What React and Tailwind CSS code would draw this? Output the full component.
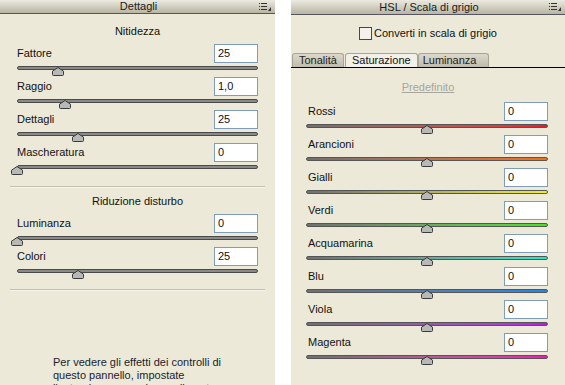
const font = { fontFamily: '"Liberation Sans", Arial, sans-serif' };

const MenuIcon = () => (
  <svg width="13" height="8" viewBox="0 0 13 8" className="shrink-0">
    <rect x="0" y="0" width="1" height="1" fill="#333" />
    <rect x="2" y="0" width="6" height="1" fill="#333" />
    <rect x="0" y="3" width="1" height="1" fill="#333" />
    <rect x="2" y="3" width="6" height="1" fill="#333" />
    <rect x="0" y="6" width="1" height="1" fill="#333" />
    <rect x="2" y="6" width="6" height="1" fill="#333" />
    <path d="M12 4 L12 8 L9 8 Z" fill="#333" />
  </svg>
);

const Header = ({ title }) => (
  <div className="h-[15px] flex items-center bg-linear-to-b from-[#eceae0] to-[#b9b5a4] border-b border-[#56545e] pl-[18px] pr-[3px]">
    <div className="flex-1 text-center text-[11px] leading-[13px] text-[#1a1a1a]">{title}</div>
    <MenuIcon />
  </div>
);

const Thumb = ({ left }) => (
  <svg className="absolute top-[1px] -ml-[6px]" style={{ left }} width="12" height="9" viewBox="0 0 12 9">
    <path d="M6 0.5 L11.5 4.2 L11.5 7.5 Q11.5 8.5 10.5 8.5 L1.5 8.5 Q0.5 8.5 0.5 7.5 L0.5 4.2 Z" fill="#b8b8b6" stroke="#3a3a3a" />
  </svg>
);

const NumBox = ({ value }) => (
  <div className="w-[44px] h-[19px] bg-white border border-[#7f9db9] pl-[3px] text-[11px] leading-[17px] text-[#111]">
    {value}
  </div>
);

const GrayRow = ({ label, value, pos }) => (
  <div className="h-[33px]">
    <div className="flex items-center justify-between">
      <span className="text-[11px] leading-[13px] text-[#111]">{label}</span>
      <NumBox value={value} />
    </div>
    <div className="relative h-[10px]">
      <div className="mt-[3px] h-[4px] rounded-full bg-[#8a8a88] border border-[#4a4a4a]" />
      <Thumb left={pos} />
    </div>
  </div>
);

const ColorRow = ({ label, track }) => (
  <div className="h-[33px]">
    <div className="flex items-center justify-between">
      <span className="ml-[2px] text-[11px] leading-[13px] text-[#111]">{label}</span>
      <NumBox value="0" />
    </div>
    <div className="relative h-[10px]">
      <div className={"mt-[3px] h-[4px] rounded-full border border-[#555555] " + track} />
      <Thumb left="50%" />
    </div>
  </div>
);

const SectionTitle = ({ children }) => (
  <div className="text-center text-[11px] leading-[13px] text-[#111]">{children}</div>
);

const Separator = () => <div className="mx-[10px] h-[2px] border-t border-[#c4c0ae] border-b border-b-[#f6f4ec]" />;

const colorRows = [
  { label: "Rossi", track: "bg-linear-to-r from-[#707070] to-[#f0102c]" },
  { label: "Arancioni", track: "bg-linear-to-r from-[#707070] to-[#f57010]" },
  { label: "Gialli", track: "bg-linear-to-r from-[#707070] to-[#f5f010]" },
  { label: "Verdi", track: "bg-linear-to-r from-[#707070] to-[#40e818]" },
  { label: "Acquamarina", track: "bg-linear-to-r from-[#707070] to-[#18e8c8]" },
  { label: "Blu", track: "bg-linear-to-r from-[#707070] to-[#2088e8]" },
  { label: "Viola", track: "bg-linear-to-r from-[#707070] to-[#b818ec]" },
  { label: "Magenta", track: "bg-linear-to-r from-[#707070] to-[#f010b8]" },
];

export default function App() {
  return (
    <div className="w-[565px] h-[385px] overflow-hidden bg-white flex gap-[16px] text-[11px] leading-[13px]" style={font}>
      {/* Dettagli */}
      <div className="w-[275px] h-full bg-[#ece9d8] flex flex-col">
        <Header title="Dettagli" />
        <div className="pt-[11px]">
          <SectionTitle>Nitidezza</SectionTitle>
        </div>
        <div className="mt-[6px] px-[17px]">
          <GrayRow label="Fattore" value="25" pos="17%" />
          <GrayRow label="Raggio" value="1,0" pos="20%" />
          <GrayRow label="Dettagli" value="25" pos="25.3%" />
          <GrayRow label="Mascheratura" value="0" pos="0%" />
        </div>
        <div className="mt-[10px]">
          <Separator />
        </div>
        <div className="pt-[7px]">
          <SectionTitle>Riduzione disturbo</SectionTitle>
        </div>
        <div className="mt-[6px] px-[17px]">
          <GrayRow label="Luminanza" value="0" pos="0%" />
          <GrayRow label="Colori" value="25" pos="25.3%" />
        </div>
        <div className="mt-[9px]">
          <Separator />
        </div>
        <p className="mt-[65px] ml-[53px] w-[170px] text-[11px] leading-[13px] text-[#1c1c2c]">
          Per vedere gli effetti dei controlli di questo pannello, impostate l'anteprima con un ingrandimento del 100% o superiore.
        </p>
      </div>

      {/* HSL */}
      <div className="flex-1 h-full bg-[#ece9d8] flex flex-col">
        <Header title="HSL / Scala di grigio" />
        <div className="mt-[12px] flex items-center justify-center gap-[2px]">
          <div className="w-[13px] h-[13px] border border-[#1c5180] bg-[#f4f2ea]" />
          <span className="text-[11px] leading-[13px] text-[#111]">Converti in scala di grigio</span>
        </div>
        <div className="mt-[13px] flex items-end border-b border-black pl-[1px] h-[15px]">
          <div className="h-[14px] px-[6px] rounded-t-[3px] border border-b-0 border-[#a8a596] bg-linear-to-b from-[#dcd9cc] to-[#bfbcad] text-[11px] leading-[13px] text-[#222]">
            Tonalità
          </div>
          <div className="h-[14px] ml-[1px] px-[6px] rounded-t-[3px] border border-b-0 border-[#a8a596] bg-[#f2f0e8] text-[11px] leading-[13px] text-[#111]">
            Saturazione
          </div>
          <div className="h-[14px] px-[4px] pr-[12px] rounded-t-[3px] border border-b-0 border-[#a8a596] bg-linear-to-b from-[#dcd9cc] to-[#bfbcad] text-[11px] leading-[13px] text-[#222]">
            Luminanza
          </div>
        </div>
        <div className="mt-[13px] text-center text-[11px] leading-[13px]">
          <span className="text-[#a7a59c] underline">Predefinito</span>
        </div>
        <div className="mt-[8px] pl-[15px] pr-[17px]">
          {colorRows.map((r) => (
            <ColorRow key={r.label} label={r.label} track={r.track} />
          ))}
        </div>
      </div>
    </div>
  );
}
